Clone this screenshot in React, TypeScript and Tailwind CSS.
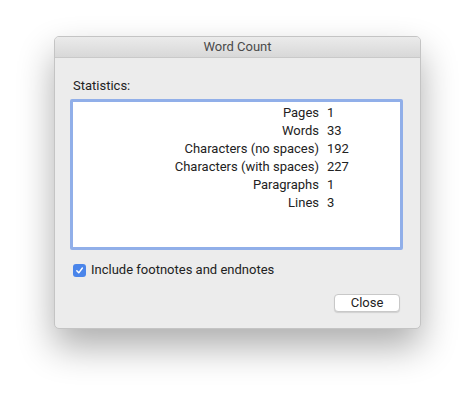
const stats: { label: string; value: string }[] = [
  { label: 'Pages', value: '1' },
  { label: 'Words', value: '33' },
  { label: 'Characters (no spaces)', value: '192' },
  { label: 'Characters (with spaces)', value: '227' },
  { label: 'Paragraphs', value: '1' },
  { label: 'Lines', value: '3' },
];

export default function App() {
  return (
    <div
      className="h-[401px] w-[474px] bg-white pl-[54px] pt-[36px] text-[13px] text-[#222]"
      style={{ fontFamily: 'Roboto, "Liberation Sans", sans-serif' }}
    >
      <div className="flex h-[293px] w-[367px] flex-col overflow-hidden rounded-[5px] border border-[#c4c4c4] bg-[#ececec] shadow-[0_18px_36px_rgba(0,0,0,0.32)]">
        <div className="flex h-[21px] shrink-0 items-center justify-center border-b border-[#c9c9c9] bg-gradient-to-b from-[#ebebeb] to-[#d8d8d8] text-[13px] text-[#4a4a4a]">
          Word Count
        </div>

        <div className="flex flex-1 flex-col px-[15px] pt-[20px]">
          <div className="pl-[3px] leading-[16px]">Statistics:</div>

          <div className="mt-[5px] h-[151px] w-[333px] rounded-[2px] border-[3px] border-[#91afe9] bg-white pt-[2px]">
            <div className="grid grid-cols-[246px_1fr] gap-x-[8px] leading-[18px]">
              {stats.map((s) => (
                <div key={s.label} className="contents">
                  <span className="text-right">{s.label}</span>
                  <span>{s.value}</span>
                </div>
              ))}
            </div>
          </div>

          <label className="mt-[12px] flex items-center gap-[5px] pl-[3px] leading-[16px]">
            <span className="flex h-[13px] w-[13px] items-center justify-center rounded-[3px] bg-[#4a85ea]">
              <svg width="9" height="9" viewBox="0 0 10 10" fill="none">
                <path d="M2 5.2 L4.2 7.6 L8.2 2.2" stroke="white" strokeWidth="1.6" strokeLinecap="round" strokeLinejoin="round" />
              </svg>
            </span>
            Include footnotes and endnotes
          </label>

          <div className="mt-[16px] flex justify-end pr-[5px]">
            <button className="h-[18px] w-[66px] rounded-[4px] border border-[#c8c8c8] bg-white text-[13px] leading-[16px] shadow-[0_1px_1px_rgba(0,0,0,0.12)]">
              Close
            </button>
          </div>
        </div>
      </div>
    </div>
  );
}
